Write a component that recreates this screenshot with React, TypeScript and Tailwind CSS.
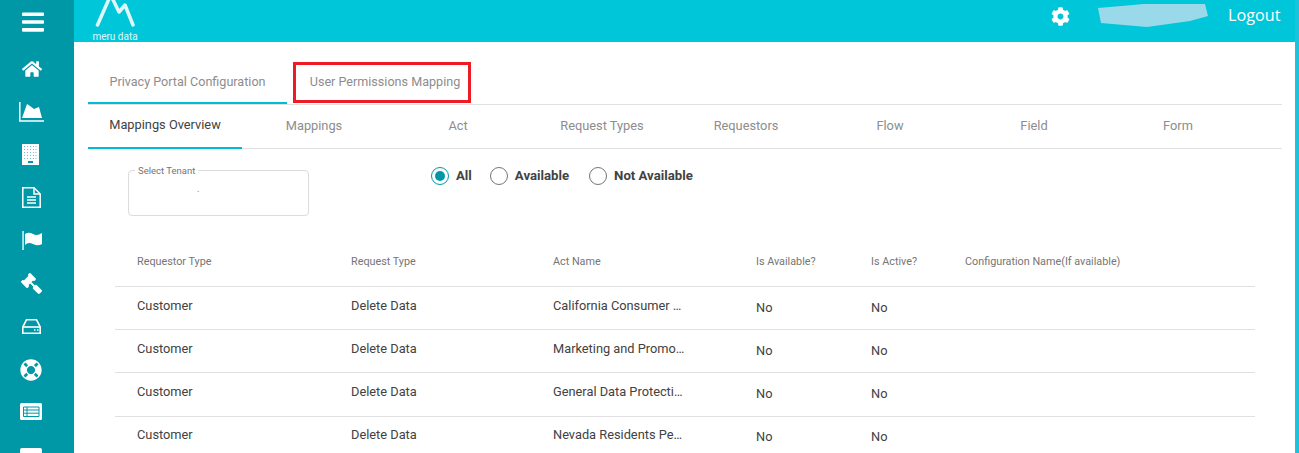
import React from "react";
import { FaBars, FaHome, FaGavel, FaLifeRing, FaCog } from "react-icons/fa";

const topTabs = ["Mappings Overview", "Mappings", "Act", "Request Types", "Requestors", "Flow", "Field", "Form"];
const rows = [
  "California Consumer …",
  "Marketing and Promo…",
  "General Data Protecti…",
  "Nevada Residents Pe…",
];

function Row({ act, index }: { act: string; index: number }) {
  const tall = index === 2;
  const late = index === 3;
  const main = late ? "pt-[8px]" : "pt-[9px]";
  const no = late ? "pt-[10px]" : "pt-[11px]";
  return (
    <div className={`flex shrink-0 border-t border-[#e0e0e0] text-[12.8px] text-[#424242] ${tall ? "h-[44px]" : "h-[43px]"}`}>
      <div className={`w-[236px] pl-[22px] ${main}`}>Customer</div>
      <div className={`w-[202px] ${main}`}>Delete Data</div>
      <div className={`w-[203px] ${main}`}>{act}</div>
      <div className={`w-[115px] ${no}`}>No</div>
      <div className={`w-[94px] ${no}`}>No</div>
    </div>
  );
}

function Radio({ label, checked }: { label: string; checked?: boolean }) {
  return (
    <div className="flex items-center gap-[7px]">
      <span className={`flex h-[18px] w-[18px] items-center justify-center rounded-full border ${checked ? "border-[#0097a7]" : "border-[#757575]"}`}>
        {checked && <span className="h-[10px] w-[10px] rounded-full bg-[#0097a7]" />}
      </span>
      <span className="text-[13.2px] font-bold text-[#424242]">{label}</span>
    </div>
  );
}

const dots = [2, 5, 8, 11, 14];

export default function App() {
  return (
    <div className="flex h-[453px] w-[1299px] overflow-hidden bg-white font-['Roboto',sans-serif]">
      <aside className="flex w-[74px] shrink-0 flex-col items-start overflow-hidden bg-[#0097a7] text-white">
        <FaBars className="ml-[22px] mt-[9px] h-[26px] w-[22px] shrink-0" />
        <FaHome className="ml-[22px] mt-[25px] h-[18px] w-[20px] shrink-0" />
        <svg className="ml-[19px] mt-[24px] shrink-0" width="25" height="20" viewBox="0 0 25 20" fill="white">
          <path d="M3 16 L8 2 L11 4 L15 7 L20 5 L23 16 Z" />
          <path d="M0.8 0 V19 H25" fill="none" stroke="white" strokeWidth="1.5" />
        </svg>
        <svg className="ml-[22px] mt-[22px] shrink-0" width="17" height="21" viewBox="0 0 17 21">
          <rect width="17" height="21" fill="white" />
          {dots.map((y) =>
            [2.5, 5.5, 8.5, 11.5, 14].map((x) => <rect key={`${x}-${y}`} x={x - 0.5} y={y} width="1" height="1" fill="#6fbfca" />)
          )}
          <rect x="6" y="17" width="5" height="2" fill="#0097a7" />
        </svg>
        <svg className="ml-[22px] mt-[22px] shrink-0" width="19" height="21" viewBox="0 0 19 21" fill="none" stroke="white" strokeWidth="1.5">
          <path d="M0.8 0.8 H12 L18.2 7 V20.2 H0.8 Z" />
          <path d="M12 0.8 V7 H18.2" />
          <path d="M5 10 H14 M5 13 H14 M5 16 H14" strokeWidth="1.6" />
        </svg>
        <svg className="ml-[22px] mt-[23px] shrink-0" width="20" height="19" viewBox="0 0 20 19" fill="white">
          <rect x="0.3" y="0" width="1.5" height="19" fill="#d8f7fb" />
          <path d="M3 3 Q7 0.5 11 3 T20 2 V13 Q16 15.5 11 13 T3 14 Z" />
        </svg>
        <FaGavel className="ml-[21px] mt-[23px] h-[21px] w-[21px] shrink-0 -scale-x-100" />
        <svg className="ml-[22px] mt-[25px] shrink-0" width="19" height="15" viewBox="0 0 19 15" fill="none" stroke="white" strokeWidth="1.6">
          <path d="M4.5 0.8 H14.5 L18.2 8 V14.2 H0.8 V8 Z" />
          <path d="M1 8 H18" />
          <path d="M12 11 H13.5 M15 11 H16.5" strokeWidth="1.4" />
        </svg>
        <FaLifeRing className="ml-[20px] mt-[25px] h-[22px] w-[22px] shrink-0" />
        <svg className="ml-[20px] mt-[22px] shrink-0" width="22" height="17" viewBox="0 0 22 17">
          <rect width="22" height="17" rx="1.5" fill="white" />
          <path d="M3.5 4 H19 V13.5 H3.5 Z M3.5 7 H19 M3.5 10.2 H19 M7 4 V13.5" fill="none" stroke="#0097a7" strokeWidth="1" />
        </svg>
        <div className="ml-[20px] mt-[28px] h-[10px] w-[22px] shrink-0 rounded-[2px] bg-white" />
      </aside>
      <main className="relative flex min-w-0 flex-1 flex-col">
        <header className="flex h-[42px] shrink-0 items-start bg-[#00c6d9] text-white">
          <div className="ml-[18px] flex w-[46px] flex-col items-center">
            <svg width="46" height="28" viewBox="0 0 46 28" fill="none" stroke="#e0f7fa" strokeWidth="3.5" strokeLinecap="round" strokeLinejoin="round">
              <path d="M5.5 25 L18.7 -5 L27 12 L33 5 L41 25" />
            </svg>
            <span className="mt-[1px] whitespace-nowrap pt-[2px] text-[10px] leading-[12px] text-[#e0f7fa]">meru data</span>
          </div>
          <FaCog className="ml-[913px] mt-[7px] h-[19px] w-[19px] shrink-0" />
          <svg className="ml-[28px] mt-[4px] shrink-0" width="112" height="23" viewBox="0 0 112 23" fill="#9ad9ea">
            <path d="M0 4 L35 1 L45 0 L107 0 L110 12 L92 17 L49 23 L3 19 Z" />
          </svg>
          <span className="ml-[18px] mt-[4px] font-['Open_Sans',sans-serif] text-[16.2px] leading-[22px]">Logout</span>
        </header>
        <div className="ml-[14px] mr-[13px] flex h-[63px] shrink-0 items-start border-b border-[#e0e0e0] text-[12.6px] text-[#8d8d8d]">
          <div className="flex h-[62px] w-[199px] items-center justify-center border-b-2 border-[#00bcd4] pt-[21px]">Privacy Portal Configuration</div>
          <div className="flex h-[62px] w-[196px] items-center justify-center border-b-2 border-transparent pt-[21px]">User Permissions Mapping</div>
        </div>
        <div className="ml-[14px] mr-[13px] flex h-[44px] shrink-0 border-b border-[#e0e0e0] text-[12.8px]">
          {topTabs.map((t, i) => (
            <div
              key={t}
              className={`flex items-center justify-center pb-[2px] ${i === 0 ? "h-[44px] w-[154px] border-b-2 border-[#00bcd4] text-[#424242]" : "w-[144px] text-[#8d8d8d]"}`}
            >
              {t}
            </div>
          ))}
        </div>
        <div className="ml-[54px] mt-[21px] flex shrink-0 items-start">
          <div className="relative h-[46px] w-[181px] rounded-[4px] border border-[#dcdcdc]">
            <span className="absolute left-[6px] top-[-6px] bg-white px-[3px] text-[9.5px] leading-[11px] text-[#757575]">Select Tenant</span>
            <span className="absolute left-[68px] top-[13px] text-[9px] leading-[11px] text-[#555]">.</span>
          </div>
          <div className="ml-[122px] mt-[-4px] flex gap-[18px]">
            <Radio label="All" checked />
            <Radio label="Available" />
            <div className="ml-[2px]">
              <Radio label="Not Available" />
            </div>
          </div>
        </div>
        <div className="ml-[41px] mr-[40px] flex min-h-0 flex-1 flex-col">
          <div className="mt-[38px] flex h-[32px] shrink-0 text-[10.8px] text-[#757575]">
            <div className="w-[236px] pl-[22px]">Requestor Type</div>
            <div className="w-[202px]">Request Type</div>
            <div className="w-[203px]">Act Name</div>
            <div className="w-[115px]">Is Available?</div>
            <div className="w-[94px]">Is Active?</div>
            <div>Configuration Name(If available)</div>
          </div>
          {rows.map((r, i) => (
            <Row key={r} act={r} index={i} />
          ))}
        </div>
        <div className="absolute left-[219px] top-[62px] h-[41px] w-[178px] border-[3px] border-[#ed1c24]" />
      </main>
      <div className="w-[4px] shrink-0 bg-[#1cc3dc]" />
    </div>
  );
}
